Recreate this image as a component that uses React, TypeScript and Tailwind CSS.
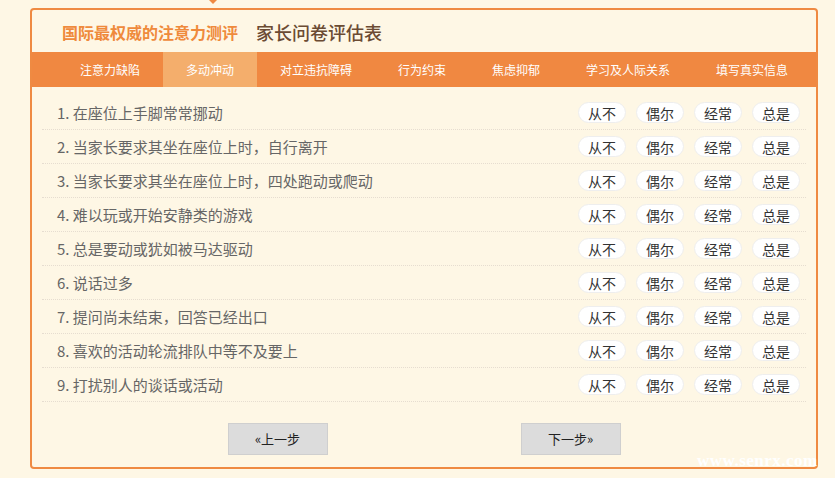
import React from "react";

const tabs = ["注意力缺陷", "多动冲动", "对立违抗障碍", "行为约束", "焦虑抑郁", "学习及人际关系", "填写真实信息"];
const questions = [
  "在座位上手脚常常挪动",
  "当家长要求其坐在座位上时，自行离开",
  "当家长要求其坐在座位上时，四处跑动或爬动",
  "难以玩或开始安静类的游戏",
  "总是要动或犹如被马达驱动",
  "说话过多",
  "提问尚未结束，回答已经出口",
  "喜欢的活动轮流排队中等不及要上",
  "打扰别人的谈话或活动",
];
const opts = ["从不", "偶尔", "经常", "总是"];

export default function App() {
  return (
    <div
      className="relative w-[835px] h-[478px] bg-[#fef7e5] overflow-hidden pt-[8px] pl-[30px]"
      style={{ fontFamily: '"Noto Sans CJK SC", "Liberation Sans", sans-serif' }}
    >
      <div className="absolute left-[209px] top-0 w-0 h-0 border-l-[4px] border-r-[4px] border-t-[4px] border-l-transparent border-r-transparent border-t-[#ef8a42]" />
      <div className="w-[788px] h-[461px] border-2 border-[#ef8a42] rounded-[4px] flex flex-col">
        <div className="h-[42px] flex items-center pl-[30px] pt-[1px]">
          <span className="text-[16px] font-bold text-[#ef8a3c] leading-none">国际最权威的注意力测评</span>
          <span className="ml-[18px] text-[18px] font-medium text-[#6b4b33] leading-none">家长问卷评估表</span>
        </div>
        <div className="h-[35px] bg-[#f08841] flex pl-[25px]">
          {tabs.map((t, i) => (
            <div
              key={t}
              className={`px-[23px] flex items-center text-[12px] text-white leading-none ${i === 1 ? "bg-[#f4ae6c]" : ""}`}
            >
              {t}
            </div>
          ))}
        </div>
        <div className="px-[10px] pt-[9px]">
          {questions.map((q, i) => (
            <div
              key={i}
              className="h-[34px] flex items-center justify-between pl-[15px] pr-[6px] border-b border-dotted border-[#e6ddd0]"
            >
              <span className="text-[15px] text-[#666666] leading-none">
                {i + 1}. {q}
              </span>
              <div className="flex gap-[10px]">
                {opts.map((o) => (
                  <span
                    key={o}
                    className="w-[48px] h-[21px] rounded-full bg-white border border-[#eeeeee] flex items-center justify-center text-[14px] text-[#333333] leading-none"
                  >
                    {o}
                  </span>
                ))}
              </div>
            </div>
          ))}
        </div>
        <div className="flex justify-center gap-[193px] mt-[21px]">
          <div className="w-[100px] h-[32px] bg-[#dcdcdc] border border-[#cfcfcf] flex items-center justify-center text-[13px] text-[#222222]">
            «上一步
          </div>
          <div className="w-[100px] h-[32px] bg-[#dcdcdc] border border-[#cfcfcf] flex items-center justify-center text-[13px] text-[#222222]">
            下一步»
          </div>
        </div>
      </div>
      <div
        className="absolute left-[697px] top-[452px] text-[17px] font-bold text-white leading-none tracking-[0.5px]"
        style={{ fontFamily: '"Liberation Serif", serif' }}
      >
        www.senrx.com
      </div>
    </div>
  );
}
